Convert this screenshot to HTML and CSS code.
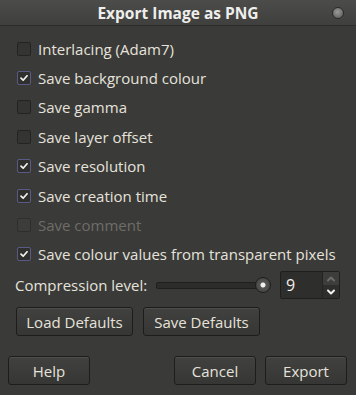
FILE: index.html
```html
<!DOCTYPE html>
<html>
<head>
<meta charset="utf-8">
<link rel="stylesheet" href="styles.css">
</head>
<body>
<div class="dialog">
  <div class="titlebar">
    <span class="title">Export Image as PNG</span>
    <span class="close"></span>
  </div>
  <div class="content">
    <div class="checks">
      <label class="row"><span class="box"></span><span>Interlacing (Adam7)</span></label>
      <label class="row"><span class="box on"><svg viewBox="0 0 14 14"><path d="M3.5 7.2 L6 9.6 L10.6 4.4"/></svg></span><span>Save background colour</span></label>
      <label class="row"><span class="box"></span><span>Save gamma</span></label>
      <label class="row"><span class="box"></span><span>Save layer offset</span></label>
      <label class="row"><span class="box on"><svg viewBox="0 0 14 14"><path d="M3.5 7.2 L6 9.6 L10.6 4.4"/></svg></span><span>Save resolution</span></label>
      <label class="row"><span class="box on"><svg viewBox="0 0 14 14"><path d="M3.5 7.2 L6 9.6 L10.6 4.4"/></svg></span><span>Save creation time</span></label>
      <label class="row disabled"><span class="box"></span><span>Save comment</span></label>
      <label class="row"><span class="box on"><svg viewBox="0 0 14 14"><path d="M3.5 7.2 L6 9.6 L10.6 4.4"/></svg></span><span>Save colour values from transparent pixels</span></label>
    </div>
    <div class="compression">
      <span class="clabel">Compression level:</span>
      <div class="slider"><div class="trough"></div><div class="knob"></div></div>
      <div class="spin">
        <span class="val">9</span>
        <div class="spinbtns">
          <span class="sb up"><svg viewBox="0 0 10 8"><path d="M2 5.5 L5 2.5 L8 5.5"/></svg></span>
          <span class="sb down"><svg viewBox="0 0 10 8"><path d="M2 2.5 L5 5.5 L8 2.5"/></svg></span>
        </div>
      </div>
    </div>
    <div class="defaults">
      <button class="btn wide">Load Defaults</button>
      <button class="btn wide">Save Defaults</button>
    </div>
  </div>
  <div class="actions">
    <button class="btn act">Help</button>
    <div class="spacer"></div>
    <button class="btn act">Cancel</button>
    <button class="btn act">Export</button>
  </div>
</div>
</body>
</html>
```
FILE: styles.css
```css
* { box-sizing: border-box; }
html, body { margin: 0; padding: 0; }
body {
  width: 356px;
  height: 395px;
  background: #3a3a38;
  font-family: "Open Sans", "DejaVu Sans", sans-serif;
  font-size: 15px;
  color: #e6e3dc;
  overflow: hidden;
}
.dialog { width: 356px; height: 395px; display: flex; flex-direction: column; }
.titlebar {
  height: 26px;
  background: linear-gradient(#4c4c4a, #3f3f3d);
  border-bottom: 1px solid #2d2d2b;
  display: flex;
  align-items: center;
  justify-content: center;
  position: relative;
}
.title { font-weight: bold; font-size: 15.5px; color: #eeeeec; }
.close {
  position: absolute;
  right: 12px;
  top: 7px;
  width: 12px;
  height: 12px;
  border-radius: 50%;
  background: radial-gradient(circle at 45% 40%, #9a9a98, #6a6a68 70%);
  border: 1px solid #2a2a28;
}
.content { padding: 8px 16px 0 17px; }
.checks { display: flex; flex-direction: column; }
.row {
  height: 29.4px;
  display: flex;
  align-items: center;
  gap: 7px;
  white-space: nowrap;
}
.box {
  flex-shrink: 0;
  width: 14px;
  height: 14px;
  border: 1px solid #232321;
  border-radius: 2px;
  background: #343432;
  display: inline-flex;
  align-items: center;
  justify-content: center;
}
.box.on { border-color: #5a5a86; background: #2f2f2e; }
.box svg { width: 14px; height: 14px; }
.box svg path { fill: none; stroke: #f2f2f0; stroke-width: 2; stroke-linecap: round; stroke-linejoin: round; }
.disabled { color: #6e6d69; }
.disabled .box { background: #3c3c3a; border-color: #2e2e2c; }
.compression {
  display: flex;
  align-items: center;
  margin-top: 2px;
  height: 28px;
  margin-left: -2px;
}
.clabel { margin-right: 9px; white-space: nowrap; flex-shrink: 0; }
.slider { position: relative; flex: 1; height: 16px; margin-right: 9px; }
.trough {
  position: absolute; left: 0; right: 6px; top: 5px; height: 7px;
  border: 1px solid #1f1f1e; border-radius: 2px;
  background: #2c2c2a;
}
.knob {
  position: absolute; right: 0; top: 0; width: 16px; height: 16px; border-radius: 50%;
  background: radial-gradient(circle, #f0f0f0 0 2px, #555553 3px, #444442 8px);
  border: 1px solid #1e1e1d;
}
.spin {
  flex-shrink: 0;
  display: flex;
  width: 60px;
  height: 28px;
  border: 1px solid #1f1f1e;
  border-radius: 2px;
  background: #2e2e2c;
}
.val { flex: 1; padding-left: 5px; line-height: 26px; font-size: 16px; color: #f0efea; }
.spinbtns { width: 17px; display: flex; flex-direction: column; border-left: 1px solid #242423; }
.sb { flex: 1; display: flex; align-items: center; justify-content: center; }
.sb svg { width: 10px; height: 8px; }
.sb path { fill: none; stroke-width: 2; stroke-linecap: round; stroke-linejoin: round; }
.up { background: #3d3d3b; }
.up path { stroke: #6d6d6b; }
.down { background: #2e2e2c; }
.down path { stroke: #f2f2f0; }
.defaults { display: flex; gap: 10px; margin-top: 8px; margin-left: -1px; }
.btn {
  font-family: inherit;
  font-size: 15px;
  color: #e6e3dc;
  background: linear-gradient(#41413f, #363634);
  border: 1px solid #1d1d1c;
  border-radius: 3px;
  box-shadow: inset 0 1px 0 rgba(255,255,255,0.07);
  height: 29px;
  padding: 0;
}
.wide { width: 117px; }
.actions { display: flex; gap: 9px; padding: 20px 9px 0 8px; }
.act { width: 82px; }
.spacer { flex: 1; }
```
